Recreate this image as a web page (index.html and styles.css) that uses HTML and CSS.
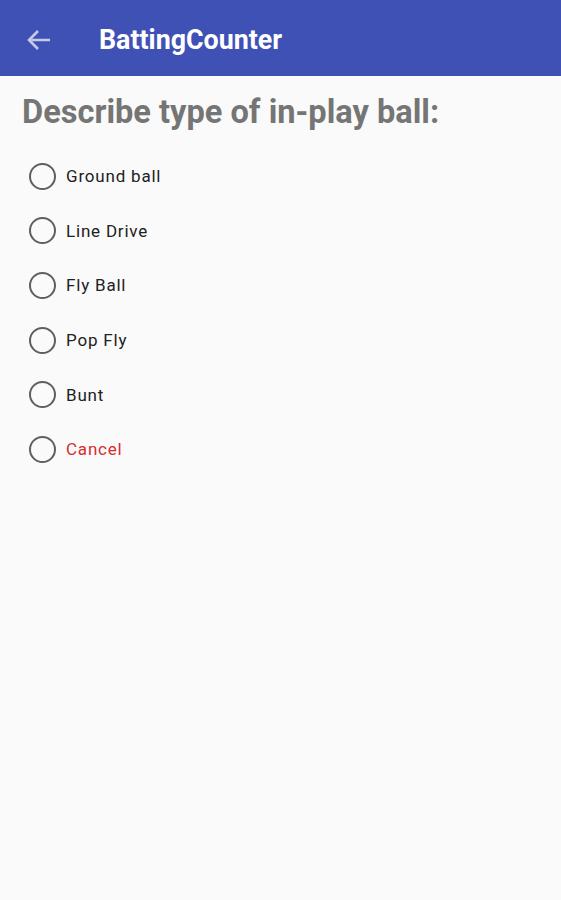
FILE: index.html
```html
<!DOCTYPE html>
<html lang="en">
<head>
  <meta charset="UTF-8">
  <meta name="viewport" content="width=device-width, initial-scale=1.0">
  <title>BattingCounter</title>
  <link rel="stylesheet" href="styles.css">
</head>
<body>
  <header class="app-bar">
    <svg class="back" width="24" height="22" viewBox="0 0 24 22">
      <path d="M23 11H2M11 2L2 11l9 9" fill="none" stroke="currentColor" stroke-width="2.6"/>
    </svg>
    <span class="title">BattingCounter</span>
  </header>

  <main class="content">
    <h1>Describe type of in-play ball:</h1>
    <form class="choices">
      <label class="choice"><span class="radio"></span>Ground ball</label>
      <label class="choice"><span class="radio"></span>Line Drive</label>
      <label class="choice"><span class="radio"></span>Fly Ball</label>
      <label class="choice"><span class="radio"></span>Pop Fly</label>
      <label class="choice"><span class="radio"></span>Bunt</label>
      <label class="choice cancel"><span class="radio"></span>Cancel</label>
    </form>
  </main>
</body>
</html>
```

FILE: styles.css
```css
body {
  margin: 0;
  padding: 0;
  background: #fafafa;
  font-family: Roboto, "Noto Sans", sans-serif;
  height: 900px;
}
.app-bar {
  height: 76px;
  background-color: #3f51b5;
  display: flex;
  align-items: center;
  padding: 4px 0 0 27px;
  box-sizing: border-box;
}
.back {
  color: #c5cae9;
  margin-right: 48px;
}
.title {
  color: white;
  font-size: 26.8px;
  font-weight: bold;
}
.content {
  padding: 0 22px;
}
h1 {
  margin: 17px 0 18px;
  font-size: 32.6px;
  font-weight: bold;
  color: #757575;
}
.choices {
  display: flex;
  flex-direction: column;
}
.choice {
  display: flex;
  align-items: center;
  height: 54.6px;
  font-size: 17px;
  letter-spacing: 0.8px;
  color: #212121;
}
.radio {
  width: 23px;
  height: 23px;
  border: 2px solid #5f5f5f;
  border-radius: 50%;
  margin: 0 10px 0 7px;
  box-sizing: content-box;
}
.cancel {
  color: #d32f2f;
}
```
